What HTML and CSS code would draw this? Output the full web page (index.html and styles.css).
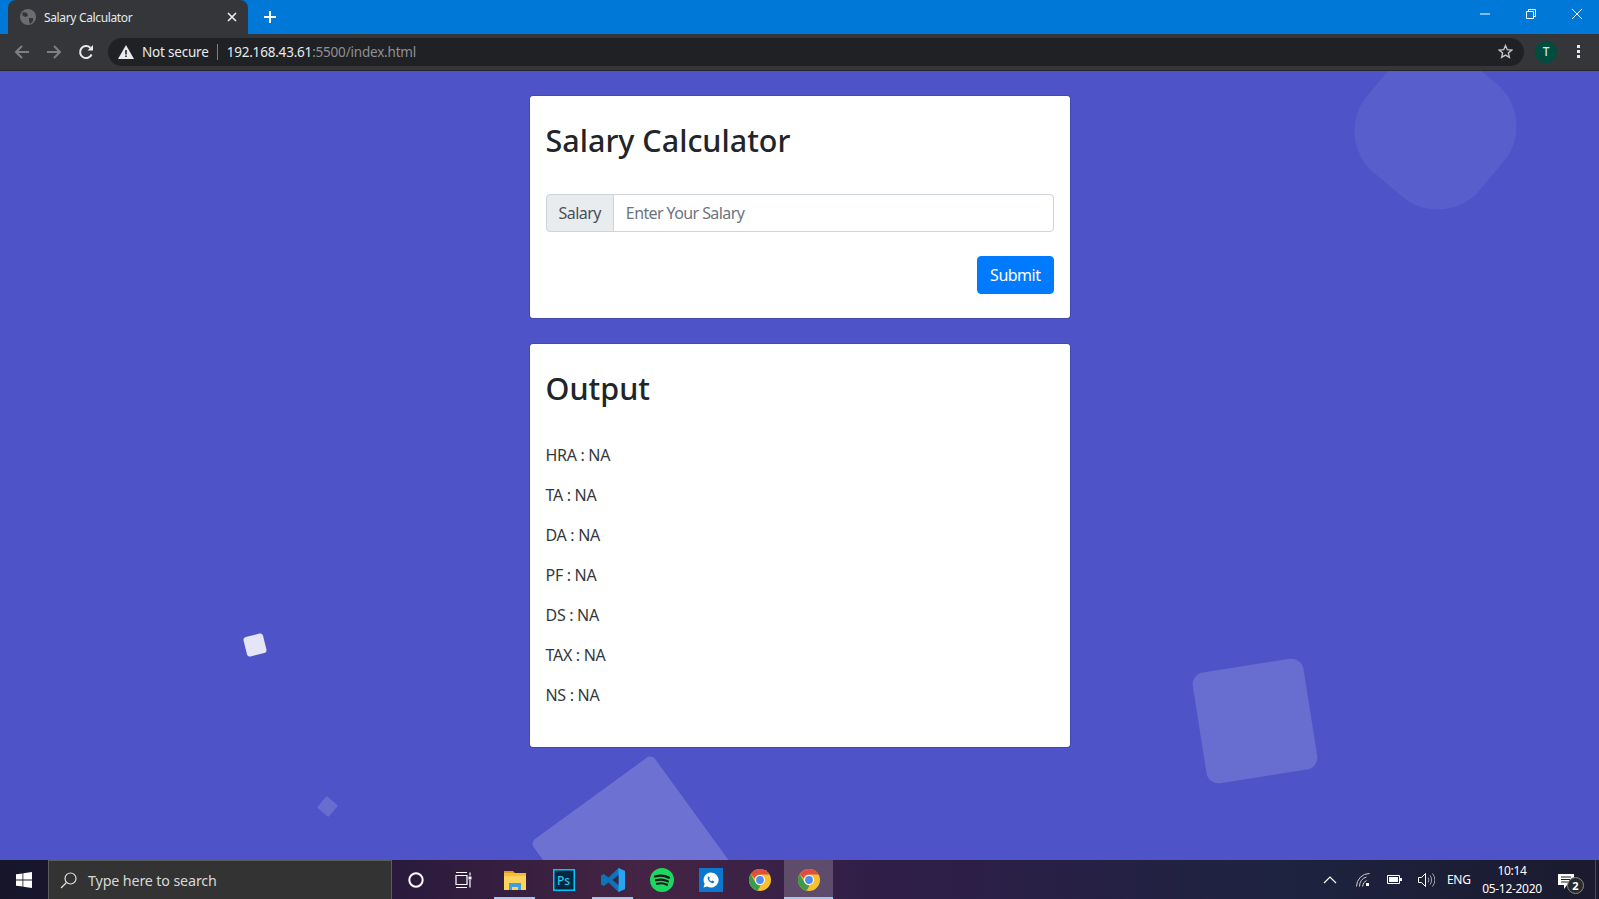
FILE: index.html
```html
<!DOCTYPE html>
<html lang="en">
  <head>
    <meta charset="utf-8" />
    <title>Salary Calculator</title>
    <link rel="stylesheet" href="styles.css">
  </head>
  <body>
    <header class="browser">
      <div class="tabstrip">
        <div class="tab">
          <svg class="tab-globe" width="16" height="16" viewBox="0 0 16 16"><circle cx="8" cy="8" r="8" fill="#6b6d70"/><path d="M3 3l4 1 1 3-3 1-3-2zM9 9l4 0 0 3-3 3-1-3z" fill="#35363a"/></svg>
          <span class="tab-title">Salary Calculator</span>
          <svg class="tab-close" width="10" height="10" viewBox="0 0 10 10"><path d="M1 1l8 8M9 1l-8 8" stroke="#e8eaed" stroke-width="1.7"/></svg>
        </div>
        <svg class="new-tab" width="12" height="12" viewBox="0 0 12 12"><path d="M6 0v12M0 6h12" stroke="#fff" stroke-width="2"/></svg>
        <div class="window-btns">
          <svg width="10" height="10" viewBox="0 0 10 10"><path d="M0 5h10" stroke="#fff"/></svg>
          <svg width="10" height="10" viewBox="0 0 10 10"><path d="M.5 2.500h7v7h-7zM2.500 2.500v-2h7v7h-2" fill="none" stroke="#fff"/></svg>
          <svg width="12" height="12" viewBox="0 0 12 12"><path d="M1 1l10 10M11 1L1 11" stroke="#fff"/></svg>
        </div>
      </div>
      <div class="toolbar">
        <svg class="nav-btn" width="16" height="16" viewBox="0 0 16 16"><path d="M15 8H2M8 2L2 8l6 6" fill="none" stroke="#7d7f82" stroke-width="2"/></svg>
        <svg class="nav-btn" width="16" height="16" viewBox="0 0 16 16"><path d="M1 8h13M8 2l6 6-6 6" fill="none" stroke="#7d7f82" stroke-width="2"/></svg>
        <svg class="nav-btn" width="16" height="16" viewBox="0 0 16 16"><path d="M13.600 10.500A6 6 0 1 1 12.300 3.800" fill="none" stroke="#e8eaed" stroke-width="2"/><path d="M9.500 6.500H15V1z" fill="#e8eaed"/></svg>
        <div class="omnibox">
          <svg width="16" height="14" viewBox="0 0 16 14"><path d="M8 0l8 14H0z" fill="#e8eaed"/><path d="M7.200 5h1.600v4.500H7.200zM7.200 10.500h1.600V12H7.200z" fill="#202124"/></svg>
          <span class="not-secure">Not secure</span>
          <span class="url"><b>192.168.43.61</b>:5500/index.html</span>
          <svg class="star" width="15" height="15" viewBox="0 0 24 24"><path d="M12 2.500l2.900 6.600 7.100.7-5.400 4.700 1.600 7-6.200-3.700-6.200 3.700 1.600-7L2 9.800l7.100-.7z" fill="none" stroke="#c4c6c9" stroke-width="2.200"/></svg>
        </div>
        <div class="avatar">T</div>
        <div class="kebab"><i></i><i></i><i></i></div>
      </div>
    </header>

    <main class="page">
      <div class="shape shape-blob"></div>
      <div class="shape shape-white"></div>
      <div class="shape shape-tiny"></div>
      <div class="shape shape-big"></div>
      <div class="shape shape-square"></div>

      <section class="card">
        <h2>Salary Calculator</h2>
        <div class="input-group">
          <span class="input-label">Salary</span>
          <input class="input" type="text" placeholder="Enter Your Salary" />
        </div>
        <div class="actions"><button class="btn" type="button">Submit</button></div>
      </section>

      <section class="card">
        <h2>Output</h2>
        <p>HRA : NA</p>
        <p>TA : NA</p>
        <p>DA : NA</p>
        <p>PF : NA</p>
        <p>DS : NA</p>
        <p>TAX : NA</p>
        <p>NS : NA</p>
      </section>
    </main>

    <footer class="taskbar">
      <div class="start">
        <svg width="16" height="16" viewBox="0 0 16 16"><path d="M0 2.300l6.500-.9v6.200H0zM7.300 1.300L16 0v7.600H7.300zM0 8.400h6.500v6.200L0 13.700zM7.300 8.400H16V16l-8.700-1.300z" fill="#fff"/></svg>
      </div>
      <div class="search">
        <svg width="17" height="17" viewBox="0 0 17 17"><circle cx="10.500" cy="6.500" r="5.500" fill="none" stroke="#e0e0e0" stroke-width="1.200"/><path d="M6.500 10.500L1 16" stroke="#e0e0e0" stroke-width="1.300"/></svg>
        <span>Type here to search</span>
      </div>
      <div class="task-item task-cortana">
        <svg width="16" height="16" viewBox="0 0 16 16"><circle cx="8" cy="8" r="6.700" fill="none" stroke="#fff" stroke-width="2"/></svg>
      </div>
      <div class="task-item task-view">
        <svg width="17" height="16" viewBox="0 0 17 16"><path d="M1 .500h11M1 15.500h11M1 3.500h11v9H1zM15 .500v3M15 8v7.500" fill="none" stroke="#fff" stroke-width="1.200"/><path d="M13.500 4.500h3v3h-3z" fill="#fff"/></svg>
      </div>
      <div class="task-item open">
        <svg width="22" height="20" viewBox="0 0 22 20"><path d="M0 1h9l2 2h-11z" fill="#d99f1f"/><path d="M0 3h22v17H0z" fill="#fcd35d"/><path d="M0 3h22v3H0z" fill="#f5bd38"/><path d="M5 13h12v7h-3v-3H8v3H5z" fill="#3f9fdc"/></svg>
      </div>
      <div class="task-item">
        <svg width="22" height="22" viewBox="0 0 22 22"><rect width="22" height="22" fill="#00c8ff"/><rect x="1.500" y="1.500" width="19" height="19" fill="#06283f"/><text class="ps-text" x="4" y="16">Ps</text></svg>
      </div>
      <div class="task-item open">
        <svg width="24" height="24" viewBox="0 0 24 24"><path d="M17.500 0L24 3v18l-6.500 3-10-9.500-4.700 3.500L0 16.500v-9L2.800 6l4.700 3.500z" fill="#0e74b8"/><path d="M17.500 0L24 3v18l-6.500 3z" fill="#2aa4ef"/><path d="M17.500 7v10l-6-5z" fill="#3b2340"/></svg>
      </div>
      <div class="task-item">
        <svg width="24" height="24" viewBox="0 0 24 24"><circle cx="12" cy="12" r="12" fill="#1ed760"/><path d="M5 8.500c5-1.500 10-1 14 1.200M6 12.300c4.500-1.200 8.500-.8 12 1.100M7 15.800c3.500-.9 7-.7 10 .9" fill="none" stroke="#15161a" stroke-width="2.200" stroke-linecap="round"/></svg>
      </div>
      <div class="task-item">
        <svg width="24" height="24" viewBox="0 0 24 24"><rect width="24" height="24" fill="#0b78d0"/><path d="M12 4.500a7.500 7.500 0 0 0-6.400 11.300L4.500 19.500l3.800-1A7.500 7.500 0 1 0 12 4.500z" fill="#fff"/><path d="M9.500 8.500c-1.500 1-1 3 .7 4.800s3.800 2.500 4.800 1.200l.3-1-2-1-.8.800c-1-.4-1.900-1.300-2.400-2.400l.7-.8-.9-2z" fill="#0b78d0"/></svg>
      </div>
      <div class="task-item">
        <svg class="chrome" width="22" height="22" viewBox="0 0 22 22"><circle cx="11" cy="11" r="11" fill="#fbc02d"/><path d="M11 0a11 11 0 0 1 9.530 5.500H11a5.500 5.500 0 0 0-5.300 4L1.800 4.900A11 11 0 0 1 11 0z" fill="#dd4f43"/><path d="M1.800 4.900l4.700 8.900a5.500 5.500 0 0 0 5 2.700L8.500 21.700A11 11 0 0 1 1.800 4.900z" fill="#3a9a50"/><circle cx="11" cy="11" r="5" fill="#fff"/><circle cx="11" cy="11" r="3.900" fill="#4b8bf5"/></svg>
      </div>
      <div class="task-item open active">
        <svg class="chrome" width="22" height="22" viewBox="0 0 22 22"><circle cx="11" cy="11" r="11" fill="#fbc02d"/><path d="M11 0a11 11 0 0 1 9.530 5.500H11a5.500 5.500 0 0 0-5.300 4L1.800 4.900A11 11 0 0 1 11 0z" fill="#dd4f43"/><path d="M1.800 4.900l4.700 8.900a5.500 5.500 0 0 0 5 2.700L8.500 21.700A11 11 0 0 1 1.800 4.900z" fill="#3a9a50"/><circle cx="11" cy="11" r="5" fill="#fff"/><circle cx="11" cy="11" r="3.900" fill="#4b8bf5"/></svg>
      </div>

      <div class="tray">
        <svg class="tray-icon tray-chevron" width="14" height="8" viewBox="0 0 14 8"><path d="M1 7l6-6 6 6" fill="none" stroke="#fff" stroke-width="1.200"/></svg>
        <svg class="tray-icon tray-net" width="14" height="14" viewBox="0 0 14 14"><path d="M.5 13.500A13 13 0 0 1 13.500 .500M3.500 13.500a10 10 0 0 1 7-9.500M6.500 13.500a7 7 0 0 1 4-6" fill="none" stroke="#d0d0d0"/><rect x="10" y="10" width="3" height="3" fill="#fff"/></svg>
        <svg class="tray-icon tray-batt" width="15" height="9" viewBox="0 0 15 9"><path d="M.5 .500h12v8H.5z" fill="none" stroke="#fff"/><path d="M2 2h9v5H2zM13 3h2v3h-2z" fill="#fff"/></svg>
        <svg class="tray-icon tray-vol" width="17" height="14" viewBox="0 0 17 14"><path d="M.5 4.500h3l4-4v13l-4-4h-3z" fill="none" stroke="#fff"/><path d="M10 4.500a4 4 0 0 1 0 5M12 2.500a7 7 0 0 1 0 9M14.500 .500a10 10 0 0 1 0 13" fill="none" stroke="#a8a8b0"/></svg>
        <span class="lang">ENG</span>
        <div class="clock"><span>10:14</span><span>05-12-2020</span></div>
        <div class="notify">
          <svg width="16" height="15" viewBox="0 0 16 15"><path d="M0 0h16v11h-7l-3 4v-4H0z" fill="#fff"/><path d="M3 3h10M3 5.500h10M3 8h7" stroke="#1c1a2c"/></svg>
          <span class="badge">2</span>
        </div>
      </div>
    </footer>
  </body>
</html>
```

FILE: styles.css
```css
* {
  box-sizing: border-box;
}
html,
body {
  margin: 0;
  height: 100%;
  overflow: hidden;
}
body {
  display: flex;
  flex-direction: column;
  font-family: "Noto Sans", "Open Sans", sans-serif;
  font-size: 16px;
  color: #212529;
  background-color: #4e54c8;
}

/* browser chrome */
.browser {
  flex: none;
}
.tabstrip {
  display: flex;
  align-items: center;
  height: 34px;
  padding-left: 8px;
  background-color: #0078d7;
}
.tab {
  display: flex;
  align-items: center;
  width: 240px;
  height: 34px;
  padding: 0 11px 0 12px;
  border-radius: 8px 8px 0 0;
  background-color: #35363a;
}
.tab-title {
  flex: 1;
  margin-left: 8px;
  font-size: 12px;
  letter-spacing: -0.35px;
  color: #e8eaed;
}
.new-tab {
  margin-left: 16px;
}
.window-btns {
  display: flex;
  align-items: center;
  gap: 35px;
  margin-left: auto;
  margin-bottom: 6px;
  padding-right: 16px;
}
.window-btns svg:first-child {
  margin-right: 1px;
}
.toolbar {
  display: flex;
  align-items: center;
  height: 37px;
  padding: 0 0 1px 14px;
  background-color: #35363a;
  border-bottom: 1px solid #26272a;
}
.nav-btn {
  margin-right: 16px;
}
.omnibox {
  display: flex;
  align-items: center;
  width: 1416px;
  height: 28px;
  margin-left: -2px;
  padding: 0 10px;
  border-radius: 14px;
  background-color: #202124;
  font-size: 13.5px;
  letter-spacing: -0.2px;
}
.not-secure {
  margin-left: 8px;
  padding-right: 8px;
  border-right: 1px solid #7d7f82;
  line-height: 16px;
  color: #e8eaed;
}
.url {
  margin-left: 9px;
  color: #8e9093;
}
.url b {
  font-weight: 400;
  color: #e8eaed;
}
.star {
  margin-left: auto;
  margin-right: 1px;
}
.avatar {
  display: flex;
  align-items: center;
  justify-content: center;
  width: 22px;
  height: 22px;
  margin-left: 11px;
  border-radius: 50%;
  background-color: #004d40;
  font-size: 12px;
  font-weight: 500;
  color: #cfe8e2;
}
.kebab {
  display: flex;
  flex-direction: column;
  gap: 2px;
  margin-left: 20px;
}
.kebab i {
  width: 3px;
  height: 3px;
  background-color: #e8eaed;
}

/* page */
.page {
  position: relative;
  flex: 1;
  display: flex;
  flex-direction: column;
  align-items: center;
  gap: 24px;
  padding-top: 24px;
  overflow: hidden;
}
.shape {
  position: absolute;
  background-color: #fff;
}
.shape-blob {
  left: 1362px;
  top: -16px;
  width: 147px;
  height: 147px;
  border-radius: 55px;
  opacity: 0.06;
  transform: rotate(40deg);
}
.shape-white {
  left: 245px;
  top: 564px;
  width: 20px;
  height: 20px;
  border-radius: 3px;
  opacity: 0.85;
  transform: rotate(-14deg);
}
.shape-tiny {
  left: 320px;
  top: 728px;
  width: 15px;
  height: 15px;
  border-radius: 1px;
  opacity: 0.15;
  transform: rotate(40deg);
}
.shape-big {
  left: 560px;
  top: 713px;
  width: 150px;
  height: 150px;
  border-radius: 6px;
  opacity: 0.18;
  transform: rotate(-36deg);
}
.shape-square {
  left: 1199px;
  top: 594px;
  width: 112px;
  height: 112px;
  border-radius: 12px;
  opacity: 0.15;
  transform: rotate(-9deg);
}
.card {
  position: relative;
  width: 542px;
  padding: 16px;
  border: 1px solid rgba(0, 0, 0, 0.125);
  border-radius: 4px;
  background-color: #fff;
  background-clip: padding-box;
}
.card h2 {
  margin: 9px 0 35px;
  font-size: 30.5px;
  font-weight: 500;
  line-height: 38px;
}
.card h2 + p {
  margin-top: 36px;
}
.card p {
  margin: 0 0 16px;
  line-height: 24px;
  letter-spacing: -0.3px;
  color: #34383c;
}
.card p:last-child {
  margin-bottom: 24px;
}
.input-group {
  display: flex;
  height: 38px;
}
.input-label {
  padding: 6px 12px;
  border: 1px solid #ced4da;
  border-radius: 4px 0 0 4px;
  background-color: #e9ecef;
  line-height: 24px;
  letter-spacing: -0.55px;
  color: #495057;
}
.input {
  flex: 1;
  min-width: 0;
  margin-left: -1px;
  padding: 6px 12px;
  border: 1px solid #ced4da;
  border-radius: 0 4px 4px 0;
  font-family: inherit;
  font-size: 16px;
  letter-spacing: -0.6px;
}
.input::placeholder {
  color: #6c757d;
}
.actions {
  display: flex;
  justify-content: flex-end;
  margin: 24px 0 8px;
}
.btn {
  height: 38px;
  padding: 6px 12px;
  border: 1px solid #007bff;
  border-radius: 4px;
  background-color: #007bff;
  font-family: inherit;
  font-size: 16px;
  letter-spacing: -0.5px;
  color: #fff;
}

/* windows taskbar */
.taskbar {
  flex: none;
  display: flex;
  align-items: stretch;
  height: 39px;
  background: linear-gradient(90deg, #16152a 0, #2a1a3c 25%, #452444 40%, #2f1e48 56%, #1d2340 80%, #1b1a2e 100%);
}
.start {
  display: flex;
  align-items: center;
  justify-content: center;
  width: 48px;
}
.search {
  display: flex;
  align-items: center;
  width: 344px;
  padding-left: 11px;
  border: 1px solid #5c5c5c;
  border-bottom: 0;
  background-color: #333;
  font-size: 14.3px;
  letter-spacing: -0.15px;
  color: #d8d8d8;
}
.search span {
  margin-left: 11px;
}
.task-item {
  position: relative;
  display: flex;
  align-items: center;
  justify-content: center;
  width: 49px;
}
.task-cortana {
  width: 47px;
}
.task-view {
  width: 48px;
  margin-right: 3px;
}
.task-item.open::after {
  content: "";
  position: absolute;
  left: 4px;
  right: 4px;
  bottom: 0;
  height: 2px;
  background-color: #9fc9ea;
}
.task-item.active {
  background-color: rgba(255, 255, 255, 0.2);
}
.task-item.active::after {
  left: 0;
  right: 0;
}
.ps-text {
  font-family: "Noto Sans", sans-serif;
  font-size: 12px;
  font-weight: 500;
  fill: #31c5f0;
}
.tray {
  display: flex;
  align-items: center;
  margin-left: auto;
  color: #fff;
}
.tray-chevron {
  margin-right: 19px;
}
.tray-net {
  margin-right: 17px;
}
.tray-batt {
  margin-right: 16px;
}
.tray-vol {
  margin-right: 12px;
}
.lang {
  width: 28px;
  font-size: 12px;
  letter-spacing: -0.3px;
}
.clock {
  display: flex;
  flex-direction: column;
  align-items: center;
  width: 72px;
  margin-left: 1px;
  font-size: 12px;
  line-height: 18px;
  letter-spacing: -0.3px;
}
.notify {
  position: relative;
  width: 45px;
  height: 100%;
  padding: 12px 0 0 7px;
  margin-left: 3px;
  margin-right: 3px;
  border-right: 1px solid #4a4a5a;
}
.badge {
  position: absolute;
  left: 16px;
  top: 17px;
  width: 17px;
  height: 17px;
  border: 1px solid #8b8b8b;
  border-radius: 50%;
  background-color: #2a2a2a;
  font-size: 11px;
  font-weight: 700;
  line-height: 15px;
  text-align: center;
}
```
